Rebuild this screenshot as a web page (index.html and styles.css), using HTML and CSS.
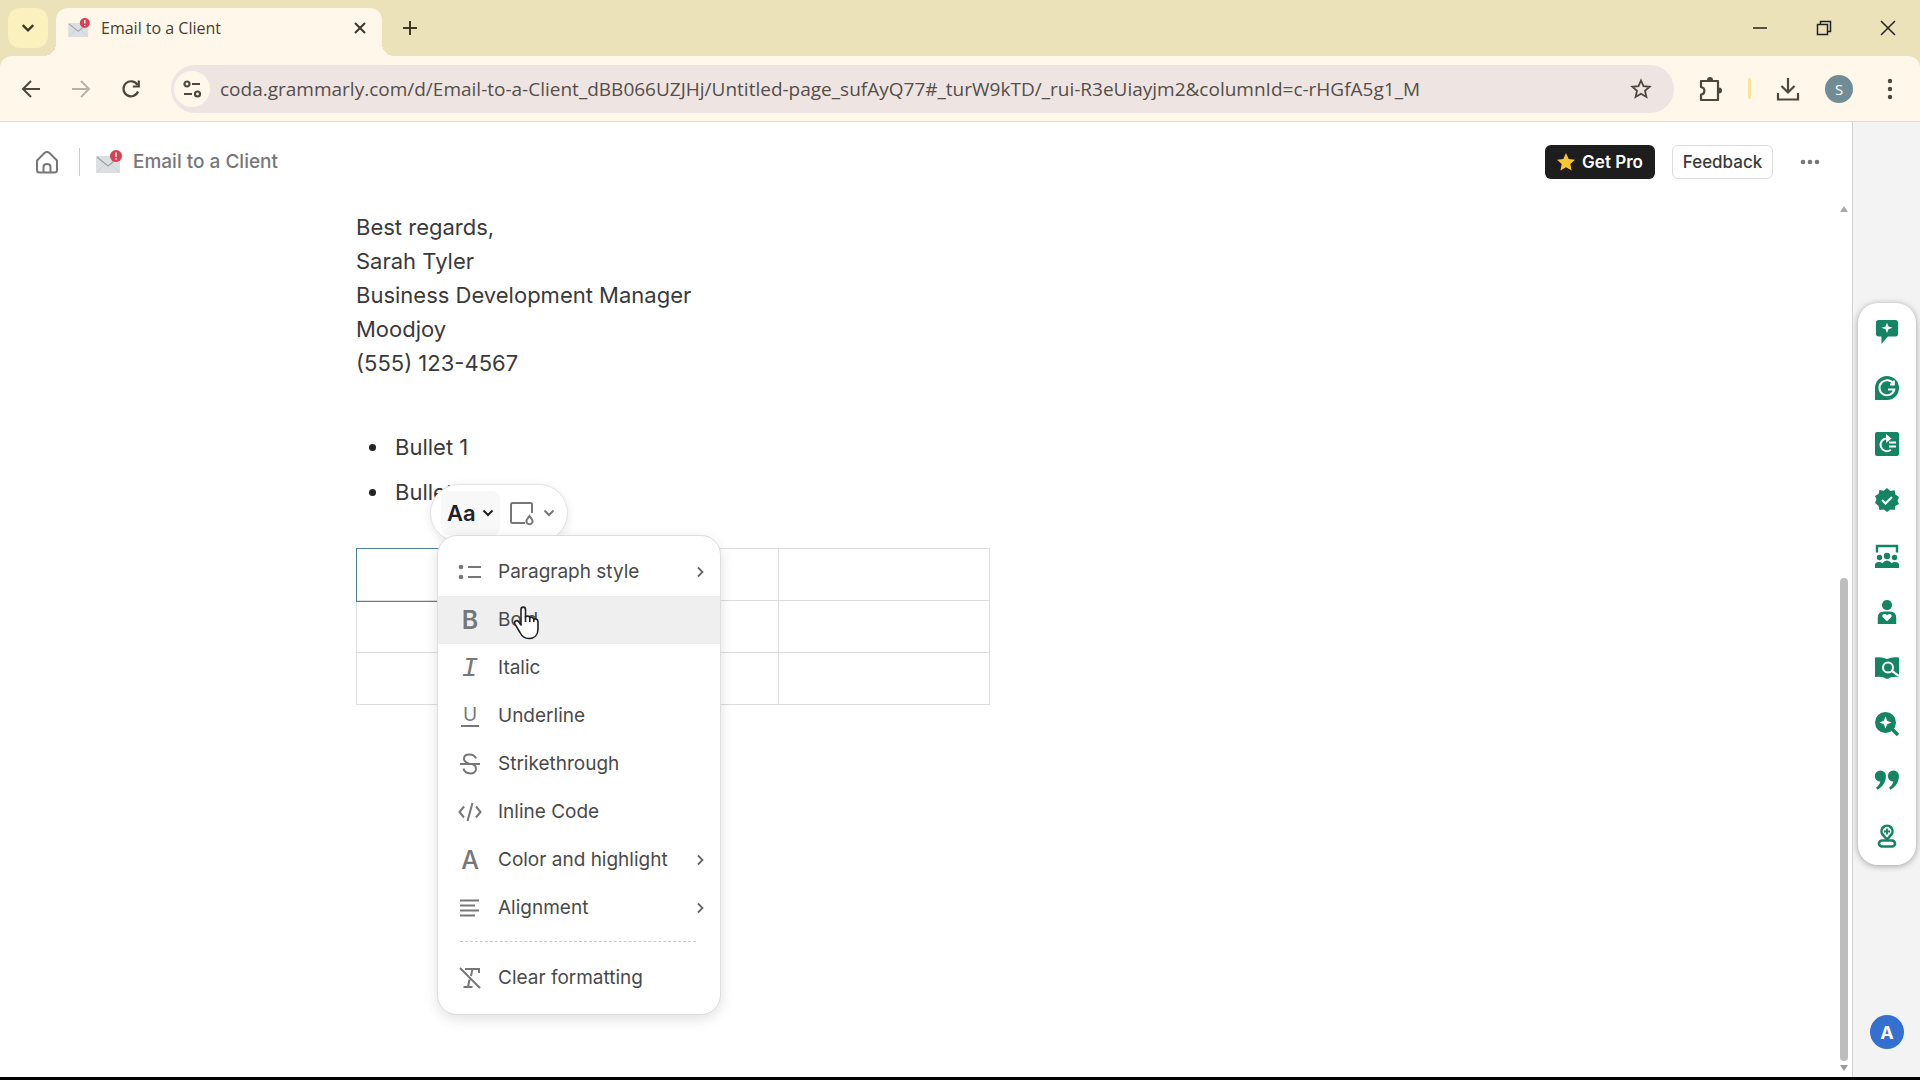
FILE: index.html
```html
<!DOCTYPE html>
<html lang="en">
<head>
    <meta charset="UTF-8">
    <meta name="viewport" content="width=device-width,initial-scale=1.0">
    <title>Email to a Client</title>
    <link rel="stylesheet" href="styles.css">
</head>
<body>
    <svg class="defs" width="0" height="0" aria-hidden="true">
        <symbol id="mail" viewBox="0 0 26 24">
            <path d="M0 6h24v17H0z" fill="#dcdfe2"/>
            <path d="M1 22l8-8M23 22l-8-8" stroke="#cbd0d4" stroke-width="1" fill="none"/>
            <path d="M1 7l11 9L23 7" stroke="#9aa3aa" stroke-width="1.3" fill="none"/>
            <circle cx="20" cy="6" r="6" fill="#dc3f52"/>
            <path d="M20 2.500v4.200M20 8.300v1.400" stroke="#fff" stroke-width="1.600"/>
        </symbol>
        <symbol id="chev-down" viewBox="0 0 12 12"><path d="M1.500 3.500L6 8l4.500-4.500" fill="none" stroke="currentColor" stroke-width="2"/></symbol>
        <symbol id="chev-right" viewBox="0 0 12 12"><path d="M4 1.500L8.500 6 4 10.500" fill="none" stroke="currentColor" stroke-width="1.800"/></symbol>
    </svg>

    <header class="browser">
        <div class="tabs">
            <button class="tab-search" aria-label="Search tabs"><svg width="14" height="14"><use href="#chev-down"/></svg></button>
            <div class="tab">
                <svg width="22" height="20"><use href="#mail"/></svg>
                <span class="tab-title">Email to a Client</span>
                <button class="tab-close" aria-label="Close tab"><svg width="12" height="12" viewBox="0 0 12 12"><path d="M1 1l10 10M11 1L1 11" stroke="currentColor" stroke-width="2"/></svg></button>
            </div>
            <button class="tab-new" aria-label="New tab"><svg width="14" height="14" viewBox="0 0 14 14"><path d="M7 0v14M0 7h14" stroke="currentColor" stroke-width="2"/></svg></button>
            <div class="win">
                <button aria-label="Minimize"><svg width="16" height="16" viewBox="0 0 16 16"><path d="M1 8h14" stroke="currentColor" stroke-width="1.500"/></svg></button>
                <button aria-label="Restore"><svg width="16" height="16" viewBox="0 0 16 16" fill="none" stroke="currentColor" stroke-width="1.500"><path d="M1.500 4.500h10v10h-10zM4.500 4V1.500h10v10H12"/></svg></button>
                <button aria-label="Close"><svg width="16" height="16" viewBox="0 0 16 16"><path d="M1 1l14 14M15 1L1 15" stroke="currentColor" stroke-width="1.500"/></svg></button>
            </div>
        </div>
        <div class="toolbar">
            <button aria-label="Back"><svg width="20" height="20" viewBox="0 0 20 20" fill="none" stroke="currentColor" stroke-width="2"><path d="M19 10H3M10 2l-8 8 8 8"/></svg></button>
            <button class="off" aria-label="Forward"><svg width="20" height="20" viewBox="0 0 20 20" fill="none" stroke="currentColor" stroke-width="2"><path d="M1 10h16M10 2l8 8-8 8"/></svg></button>
            <button aria-label="Reload"><svg width="20" height="20" viewBox="0 0 20 20" fill="none" stroke="currentColor" stroke-width="2.200"><path d="M17 12.500A7.500 7.500 0 1 1 16.500 6M17.800 1.500v6h-6"/></svg></button>
            <div class="omnibox">
                <button class="site" aria-label="Site information"><svg width="20" height="18" viewBox="0 0 20 18" fill="none" stroke="currentColor" stroke-width="2.200"><circle cx="5" cy="4" r="2.500"/><path d="M10 4h8M2 14h8"/><circle cx="15.500" cy="14" r="2.500"/></svg></button>
                <input class="url" type="text" aria-label="Address" value="coda.grammarly.com/d/Email-to-a-Client_dBB066UZJHj/Untitled-page_sufAyQ77#_turW9kTD/_rui-R3eUiayjm2&amp;columnId=c-rHGfA5g1_M">
                <button class="star" aria-label="Bookmark this tab"><svg width="22" height="22" viewBox="0 0 22 22"><path d="M11 2.500l2.500 5.700 6.200.6-4.700 4.100 1.400 6.100L11 15.800 5.600 19 7 12.900 2.300 8.800l6.200-.6z" fill="none" stroke="currentColor" stroke-width="1.800"/></svg></button>
            </div>
            <button aria-label="Extensions"><svg width="26" height="26" viewBox="0 0 26 26"><path d="M3 5h17v19H3v-5.500c4 0 5-6.500 0-7.500z" fill="none" stroke="currentColor" stroke-width="2.200" stroke-linejoin="round"/><path d="M9 4a3 3 0 0 1 6 0zM21 11.500a3 3 0 0 1 0 6z" fill="currentColor"/></svg></button>
            <i class="bar"></i>
            <button aria-label="Downloads"><svg width="24" height="24" viewBox="0 0 24 24" fill="none" stroke="currentColor" stroke-width="2.200"><path d="M12 1v14M5.500 9l6.500 6.500L18.500 9M2 16v6.500h20V16"/></svg></button>
            <button class="avatar" aria-label="Profile">S</button>
            <button aria-label="Menu"><svg width="6" height="22" viewBox="0 0 6 22" fill="currentColor"><circle cx="3" cy="3" r="2.200"/><circle cx="3" cy="11" r="2.200"/><circle cx="3" cy="19" r="2.200"/></svg></button>
        </div>
    </header>

    <div class="app">
        <main class="doc">
            <div class="doc-head">
                <a class="home" href="#" aria-label="Home"><svg width="24" height="24" viewBox="0 0 24 24" fill="none" stroke="currentColor" stroke-width="2" stroke-linejoin="round"><path d="M2 10.500L9.500 3q2.500-2 5 0L22 10.500V20q0 2.500-2.500 2.500h-15Q2 22.500 2 20z"/><path d="M8.500 22v-5q0-3 3.500-3t3.500 3v5"/></svg></a>
                <a class="crumb" href="#"><svg width="26" height="24"><use href="#mail"/></svg>Email to a Client</a>
                <button class="pro"><svg width="18" height="18" viewBox="0 0 18 18"><path d="M9 0l2.700 6 6.300.7-4.700 4.300 1.300 6.500L9 14.200 3.400 17.500 4.700 11 0 6.700 6.300 6z" fill="#fbc531"/></svg>Get Pro</button>
                <button class="feedback">Feedback</button>
                <button class="more" aria-label="More"><svg width="20" height="6" viewBox="0 0 20 6" fill="currentColor"><circle cx="3" cy="3" r="2.300"/><circle cx="10" cy="3" r="2.300"/><circle cx="17" cy="3" r="2.300"/></svg></button>
            </div>
            <div class="doc-body">
                <article class="page">
                    <p>Best regards,<br>Sarah Tyler<br>Business Development Manager<br>Moodjoy<br>(555) 123-4567</p>
                    <ul>
                        <li>Bullet 1</li>
                        <li>Bullet 2</li>
                    </ul>
                    <div class="grid-wrap">
                        <table class="grid">
                            <tbody>
                                <tr><td class="sel"></td><td></td><td></td></tr>
                                <tr><td></td><td></td><td></td></tr>
                                <tr><td></td><td></td><td></td></tr>
                            </tbody>
                        </table>
                        <div class="pill">
                            <button class="text-style" aria-label="Text style"><span>Aa</span><svg width="12" height="12"><use href="#chev-down"/></svg></button>
                            <button class="cell-color" aria-label="Cell color"><svg width="26" height="26" viewBox="0 0 26 26" fill="none" stroke="currentColor" stroke-width="2"><path d="M16 23H3.500Q2 23 2 21.500v-17Q2 3 3.500 3h18Q23 3 23 4.500V13"/><path d="M20.500 16l2.500 3.500a3 3 0 1 1-5 0z"/></svg><svg width="12" height="12"><use href="#chev-down"/></svg></button>
                        </div>
                        <div class="menu">
                            <button><svg class="ic" viewBox="0 0 24 24"><circle cx="3" cy="7" r="2.300" fill="currentColor"/><circle cx="3" cy="17" r="2.300" fill="currentColor"/><path d="M10 7h13M10 17h13" stroke="currentColor" stroke-width="2"/></svg>Paragraph style<svg class="go" width="12" height="12"><use href="#chev-right"/></svg></button>
                            <button class="hover"><span class="ic bold">B</span>Bold</button>
                            <button><span class="ic italic">I</span>Italic</button>
                            <button><span class="ic under">U</span>Underline</button>
                            <button><svg class="ic" viewBox="0 0 24 24" fill="none" stroke="currentColor" stroke-width="2"><path d="M18 6.500C16 1 6 1.200 6 6.700c0 3.500 3 4.300 6 5.300M5.500 16.500C7 23 18 23 18 17c0-3-1.500-4.300-4-5M2 12h20"/></svg>Strikethrough</button>
                            <button><svg class="ic" viewBox="0 0 24 24" fill="none" stroke="currentColor" stroke-width="2"><path d="M6 6.500L1.500 12 6 17.500M18 6.500l4.500 5.500-4.500 5.500M14.500 3l-5 18"/></svg>Inline Code</button>
                            <button><span class="ic letter">A</span>Color and highlight<svg class="go" width="12" height="12"><use href="#chev-right"/></svg></button>
                            <button><svg class="ic" viewBox="0 0 24 24" stroke="currentColor" stroke-width="2"><path d="M2 4.500h19M2 9.500h15M2 14.500h19M2 19.500h15"/></svg>Alignment<svg class="go" width="12" height="12"><use href="#chev-right"/></svg></button>
                            <hr>
                            <button><svg class="ic" viewBox="0 0 24 24" fill="none" stroke="currentColor" stroke-width="2"><path d="M7 3h14v4M14.500 3l-1.500 7M11.500 13.500L10 21M5.500 21h9M2 2l20 20"/></svg>Clear formatting</button>
                            <svg class="cursor" width="28" height="36" viewBox="0 0 28 36"><path d="M8 20V4.500C8 1.300 12.500 1.300 12.500 4.500V12c1-1.500 4-1.200 4.300.8 1.200-1 3.700-.6 4 1.400 2-.8 4.200.2 4.200 2.600V24c0 6-3.500 9.500-9 9.500-4.500 0-7-2-9-6l-5-8.300c-1.500-3 1.800-4.700 3.600-2.700z" fill="#fff" stroke="#222" stroke-width="1.600" stroke-linejoin="round"/><path d="M12.500 11v6M16.800 12v5M20.800 13.500V17" stroke="#222" stroke-width="1.600"/></svg>
                        </div>
                    </div>
                </article>
                <div class="scroll" aria-hidden="true">
                    <svg width="8" height="6" viewBox="0 0 8 6"><path d="M4 0l4 6H0z" fill="#aaa"/></svg>
                    <i class="thumb"></i>
                    <svg width="8" height="6" viewBox="0 0 8 6"><path d="M0 0h8L4 6z" fill="#999"/></svg>
                </div>
            </div>
        </main>

        <aside class="side">
            <nav class="dock">
                <a href="#" aria-label="Chat"><svg viewBox="0 0 24 26"><path d="M3 0h18q3 0 3 3v12q0 3-3 3h-8l-7 8v-8H3q-3 0-3-3V3q0-3 3-3z" fill="currentColor"/><path d="M12 3l1.600 4L18 8.500 13.600 10 12 14l-1.600-4L6 8.500 10.400 7z" fill="#fff"/></svg></a>
                <a href="#" aria-label="Grammarly"><svg viewBox="0 0 24 24"><path d="M12 0a12 12 0 1 1 0 24H0V12A12 12 0 0 1 12 0z" fill="currentColor"/><path d="M18.500 8A7.500 7.500 0 1 0 19.300 13.500H13M18.800 4.500V8.500H15" fill="none" stroke="#fff" stroke-width="2"/></svg></a>
                <a href="#" aria-label="Rewrite"><svg viewBox="0 0 24 24"><rect width="24" height="24" rx="2" fill="currentColor"/><path d="M14.500 6.500h-2.700a6.300 6.300 0 1 0 4 11.200M14 10.500h7M14 14.500h7" fill="none" stroke="#fff" stroke-width="2"/><path d="M11 2l5.500 4.500L11 11z" fill="#fff"/></svg></a>
                <a href="#" aria-label="Proofread"><svg viewBox="0 0 24 24"><path d="M12 0l3.300 2.900 4.300-.7.800 4.300L24 9l-1.500 3.500L24 16l-3.600 2-.8 4-4.300-.5L12 24l-3.300-2.500-4.300.5-.8-4L0 15l1.500-3.500L0 8l3.600-2 .8-4 4.300.8z" fill="currentColor"/><path d="M7 12l3.500 3.500L17 9" fill="none" stroke="#fff" stroke-width="2.200"/></svg></a>
                <a href="#" aria-label="Audience"><svg viewBox="0 0 24 24" fill="currentColor"><path d="M2 8.500V2h20v6.500" fill="none" stroke="currentColor" stroke-width="2.400"/><circle cx="4.500" cy="13.500" r="2.700"/><circle cx="12" cy="12" r="3.200"/><circle cx="19.500" cy="13.500" r="2.700"/><path d="M0 24v-3q0-3 4-3 2 0 3.500 1.200Q9 16.500 12 16.500t4.500 2.700Q18 18 20 18q4 0 4 3v3z"/></svg></a>
                <a href="#" aria-label="Humanizer"><svg viewBox="0 0 24 26"><circle cx="12" cy="5.500" r="5.500" fill="currentColor"/><path d="M2 26v-7q0-6.500 7-6.500h6q7 0 7 6.500v7z" fill="currentColor"/><path d="M12 23l-4.500-4.300c-2-2.500 1.800-5.200 4.500-2.200 2.700-3 6.500-.3 4.500 2.200z" fill="#fff"/></svg></a>
                <a href="#" aria-label="Find sources"><svg viewBox="0 0 24 24"><path d="M0 1.500q7-1 12 1.500 5-2.500 12-1.500V21q-7-1-12 2-5-3-12-2z" fill="currentColor"/><circle cx="13" cy="11.500" r="5" fill="none" stroke="#fff" stroke-width="2"/><path d="M17 15l7 5" stroke="#fff" stroke-width="2.200"/></svg></a>
                <a href="#" aria-label="Check text"><svg viewBox="0 0 24 24"><circle cx="10.500" cy="10.500" r="10.500" fill="currentColor"/><path d="M16 16l7 7" stroke="currentColor" stroke-width="3.500"/><path d="M10.500 4.500l1.700 4.300 4.300 1.700-4.300 1.700-1.700 4.300-1.700-4.300-4.300-1.700 4.300-1.700z" fill="#fff"/></svg></a>
                <a href="#" aria-label="Citations"><svg viewBox="0 0 24 24"><path id="q" d="M5.500 2.500a5.300 5.300 0 0 1 5.400 5.300c0 6-2.900 11-8.400 13.900L1 19.800c2.500-1.900 3.800-3.800 4.300-6.200A5.500 5.500 0 0 1 5.500 2.500z" fill="currentColor"/><use href="#q" x="13"/></svg></a>
                <a href="#" aria-label="Authorship"><svg viewBox="0 0 24 24" fill="none" stroke="currentColor" stroke-width="2.600"><path d="M12 15.500L8 11a5.500 5.500 0 1 1 8 0z"/><path d="M12 4.500v6M9 7.500h6" stroke-width="1.800"/><rect x="4" y="16.500" width="16" height="6" rx="3"/></svg></a>
            </nav>
            <button class="account" aria-label="Account">A</button>
        </aside>
    </div>
</body>
</html>
```
FILE: styles.css
```css
*{ box-sizing: border-box;}
body{ margin: 0; height: 100vh; display: flex; flex-direction: column; border-bottom: 3px solid #000; background: #fff; font-family: Inter,"Liberation Sans",sans-serif; color: #3a3a3a; overflow: hidden;}
button{ display: flex; align-items: center; justify-content: center; flex: none; margin: 0; padding: 0; border: 0; background: none; color: inherit; font: inherit;}
svg{ display: block; flex: none;}
a{ color: inherit; text-decoration: none;}
.defs{ position: absolute;}

/* browser chrome */
.browser{ flex: none; font-family: "Open Sans","Noto Sans",sans-serif; background: #ebe2ba;}
.tabs{ display: flex; height: 56px; padding: 8px 0 0 8px; color: #3d3826;}
.tab-search{ width: 40px; height: 40px; border-radius: 12px; background: #fbf1bf;}
.tab{ position: relative; display: flex; align-items: center; width: 326px; height: 48px; margin-left: 8px; padding: 0 16px 8px 12px; border-radius: 12px 12px 0 0; background: #fff7ea;}
.tab:before,.tab:after{ content: ""; position: absolute; bottom: 0; width: 12px; height: 12px;}
.tab:before{ left: -12px; background: radial-gradient(circle at 0 0,transparent 12px,#fff7ea 12px);}
.tab:after{ right: -12px; background: radial-gradient(circle at 100% 0,transparent 12px,#fff7ea 12px);}
.tab-title{ flex: 1; margin-left: 11px; font-size: 16px; color: #453f35;}
.tab-new{ width: 40px; height: 40px; margin-left: 8px;}
.win{ display: flex; margin-left: auto; color: #222;}
.win button{ width: 64px; height: 40px;}
.toolbar{ display: flex; align-items: center; height: 66px; padding: 0 17px 0 21px; border-radius: 12px 12px 0 0; border-bottom: 1px solid #dedcd6; background: #fff7ea; color: #4f473d;}
.toolbar > button{ width: 20px; height: 40px; margin-right: 30px;}
.toolbar .off{ color: #b9b2a8;}
.toolbar .omnibox{ display: flex; align-items: center; flex: 1; height: 48px; margin-right: 24px; padding: 0 22px 0 3px; border-radius: 24px; background: #eee5e2;}
.site{ width: 36px; height: 36px; border-radius: 50%; background: #fff7ea;}
.url{ flex: 1; min-width: 0; margin-left: 10px; padding: 0; border: 0; background: none; font-family: inherit; font-size: 19px; color: #554e4a;}
.omnibox ~ button{ width: 26px; margin-right: 24px;}
.toolbar .bar{ width: 3px; height: 21px; margin-right: 24px; border-radius: 2px; background: #fae49c;}
.toolbar .avatar{ width: 28px; height: 28px; border-radius: 50%; background: #728c95; color: #fff; font-size: 15px;}
.toolbar > button:last-child{ width: 26px; margin-right: 0;}

/* document */
.app{ flex: 1; display: flex; min-height: 0;}
.doc{ flex: 1; display: flex; flex-direction: column; min-width: 0;}
.doc-head{ display: flex; align-items: center; flex: none; height: 80px; padding: 0 31px 0 35px; font-size: 19px;}
.home{ padding-right: 20px; color: #777;}
.crumb{ display: flex; align-items: center; gap: 11px; margin-right: auto; padding-left: 16px; border-left: 1px solid #ccc; line-height: 28px; color: #777; font-weight: 500;}
.pro,.feedback{ height: 34px; border-radius: 6px; font-size: 17px;}
.pro{ gap: 7px; width: 110px; margin-right: 17px; background: #1d1d1d; color: #fff; font-weight: 600;}
.feedback{ width: 101px; border: 1px solid #ddd; font-weight: 500;}
.more{ width: 22px; height: 34px; margin-left: 26px; color: #777;}
.doc-body{ flex: 1; display: flex; min-height: 0;}
.page{ flex: 1; padding: 8px 0 0 356px; font-size: 22px; line-height: 34px;}
.page p{ margin: 0;}
.page ul{ margin: 45px 0 33px; padding-left: 34px;}
.page li{ height: 45px; padding-left: 5px; line-height: 45px;}
.page li::marker{ color: #222;}
.grid-wrap{ position: relative; width: 634px;}
.grid{ width: 100%; table-layout: fixed; border-collapse: collapse;}
.grid td{ height: 52px; padding: 0; border: 1px solid #ddd;}
.grid .sel{ outline: 1px solid #4b8399;}

/* floating format bar and its menu */
.pill{ position: absolute; left: 74px; top: -64px; display: flex; align-items: center; width: 138px; height: 58px; padding: 0 10px; border: 1px solid #e3e3e3; border-radius: 29px; background: #fff; box-shadow: 0 2px 10px rgba(0,0,0,.1);}
.pill button{ gap: 6px; height: 44px; padding: 0 6px;}
.text-style{ border-radius: 8px; background: #f8f8f8; color: #222; font-size: 22px; font-weight: 600;}
.pill .cell-color{ gap: 8px; padding-left: 9px; color: #777;}
.menu{ position: absolute; left: 81px; top: -13px; width: 284px; padding: 12px 0; border: 1px solid #ddd; border-radius: 20px; background: #fff; box-shadow: 0 4px 14px rgba(0,0,0,.12);}
.menu button{ justify-content: flex-start; width: 100%; height: 48px; padding: 0 14px 0 20px; font-size: 19px; color: #4a4a4a;}
.menu .hover{ background: #efefef;}
.menu hr{ margin: 9px 24px 12px 22px; border: 0; border-top: 1px dashed #ccc;}
.ic{ display: flex; align-items: center; justify-content: center; width: 24px; height: 24px; margin-right: 16px; color: #777;}
.bold{ font-size: 25px; font-weight: 600;}
.italic{ font: italic 28px "Liberation Mono",monospace;}
.under{ width: 18px; height: 22px; margin: 0 19px 0 3px; border-bottom: 2px solid #777;}
.letter{ font-size: 25px; font-weight: 500;}
.go{ margin-left: auto; color: #666;}
.cursor{ position: absolute; left: 75px; top: 69px;}

.scroll{ display: flex; flex-direction: column; align-items: center; width: 16px; padding: 4px 0 6px;}
.thumb{ width: 8px; height: 483px; margin: auto 0 4px; border-radius: 4px; background: #bdbdbd;}

/* assistant dock */
.side{ position: relative; display: flex; align-items: center; justify-content: center; width: 68px; padding-bottom: 32px; border-left: 1px solid #d5d5d5; background: #f3f3f3;}
.dock{ display: flex; flex-direction: column; gap: 32px; width: 58px; padding: 17px 0; border-radius: 20px; background: #fff; box-shadow: 0 1px 6px rgba(0,0,0,.35); color: #158463;}
.dock a{ display: flex; justify-content: center;}
.dock svg{ width: 24px; height: 24px;}
.account{ position: absolute; left: 17px; bottom: 28px; width: 34px; height: 34px; border-radius: 50%; background: #3470d0; color: #fff; font-size: 18px; font-weight: 700;}
```
